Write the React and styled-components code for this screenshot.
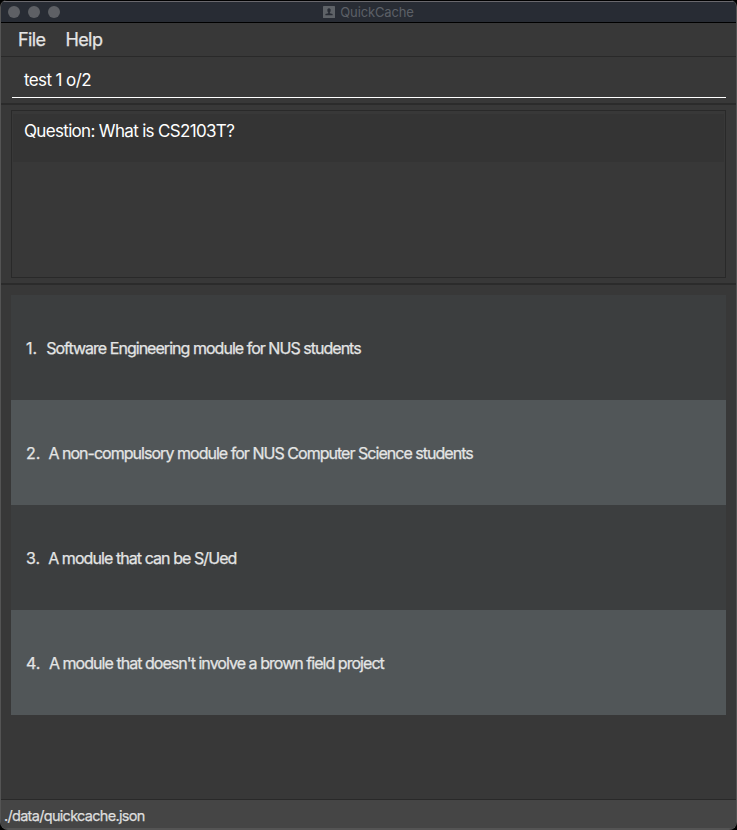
import React from "react";
import styled, { createGlobalStyle } from "styled-components";

const GlobalStyle = createGlobalStyle`
  * { box-sizing: border-box; }
  html, body { margin: 0; background: #000; }
  body { font-family: Inter, "Liberation Sans", sans-serif; overflow: hidden; }
`;

const Window = styled.main`
  width: 737px;
  height: 830px;
  display: flex;
  flex-direction: column;
  background: #383838;
  border: 1px solid #545454;
  border-top: 0;
  border-radius: 7px 7px 8px 8px;
  overflow: hidden;
`;

const TitleBar = styled.header`
  height: 23px;
  flex: none;
  display: grid;
  grid-template-columns: 1fr auto 1fr;
  align-items: center;
  padding: 1px 7px 0;
  background: #282c34;
  border-top: 1px solid #000;
  border-bottom: 1px solid #000;
  box-shadow: inset 0 1px #69686d;
`;

const Lights = styled.div`
  display: flex;
  gap: 8px;
`;

const Light = styled.span`
  width: 12px;
  height: 12px;
  border-radius: 50%;
  background: #5e6065;
`;

const Title = styled.div`
  display: flex;
  align-items: center;
  gap: 5px;
  color: #5c6067;
  font-size: 13px;
  line-height: 20px;
  letter-spacing: -0.15px;
`;

const MenuBar = styled.nav`
  height: 34px;
  flex: none;
  display: flex;
  gap: 20px;
  padding: 0 17px;
  border-bottom: 1px solid #292929;
`;

const MenuItem = styled.span`
  color: #e4e4e4;
  font-size: 18px;
  line-height: 34px;
  letter-spacing: -0.6px;
  -webkit-text-stroke: 0.25px currentColor;
`;

const CommandArea = styled.section`
  height: 48px;
  flex: none;
  padding: 0 10px 6px 11px;
  border-bottom: 2px solid #2b2b2b;
`;

const Command = styled.div`
  height: 41px;
  padding: 3px 12px 0;
  border-bottom: 1px solid #fff;
  color: #fff;
  font-size: 17px;
  line-height: 40px;
  letter-spacing: -0.6px;
  white-space: pre;
`;

const ResultArea = styled.section`
  height: 180px;
  flex: none;
  padding: 5px 10px;
  border-bottom: 2px solid #2b2b2b;
`;

const ResultBox = styled.div`
  height: 168px;
  padding: 3px 1px;
  border: 1px solid #292929;
`;

const ResultText = styled.div`
  height: 48px;
  padding-left: 11px;
  background: #343434;
  color: #fff;
  font-size: 17px;
  line-height: 35px;
  letter-spacing: -0.67px;
`;

const OptionList = styled.ul`
  flex: 1;
  margin: 0;
  padding: 10px 10px 0;
  list-style: none;
`;

const Option = styled.li`
  height: 105px;
  display: flex;
  align-items: center;
  gap: ${({ $gap }) => $gap}px;
  padding: 1px 15px 0;
  background: #3c3e3f;
  color: #e4e5e5;
  font-size: 16px;
  line-height: 22px;
  white-space: nowrap;
  -webkit-text-stroke: 0.25px currentColor;
  &:nth-child(even) { background: #515658; }
`;

const OptionText = styled.span`
  letter-spacing: ${({ $spacing }) => $spacing}px;
`;

const StatusBar = styled.footer`
  height: 30px;
  flex: none;
  padding: 1px 3px 0;
  background: #454545;
  border-top: 1px solid #292929;
  border-bottom: 1px solid #545454;
  color: #dedede;
  font-size: 14.5px;
  line-height: 30px;
  letter-spacing: -0.7px;
  -webkit-text-stroke: 0.25px currentColor;
`;

const options = [
  ["Software Engineering module for NUS students", -0.97, 9],
  ["A non-compulsory module for NUS Computer Science students", -0.97, 8],
  ["A module that can be S/Ued", -0.93, 8],
  ["A module that doesn't involve a brown field project", -0.96, 8.5],
];

function ContactIcon() {
  return (
    <svg width="12" height="12" viewBox="0 0 12 12" aria-hidden="true">
      <rect width="12" height="12" rx="0.6" fill="#5e6267" />
      <path d="M4.4 3.2Q6 1.4 7.6 3.2V5.2L6.8 6.4V7.2L9.6 8V9.2H2.4V8L5.2 7.2V6.4L4.4 5.2Z" fill="#282c34" />
    </svg>
  );
}

export default function App() {
  return (
    <>
      <GlobalStyle />
      <Window>
        <TitleBar>
          <Lights><Light /><Light /><Light /></Lights>
          <Title><ContactIcon />QuickCache</Title>
        </TitleBar>
        <MenuBar>
          <MenuItem>File</MenuItem>
          <MenuItem>Help</MenuItem>
        </MenuBar>
        <CommandArea><Command>test 1 o/2</Command></CommandArea>
        <ResultArea>
          <ResultBox><ResultText>Question: What is CS2103T?</ResultText></ResultBox>
        </ResultArea>
        <OptionList>
          {options.map(([text, spacing, gap], index) => (
            <Option key={text} $gap={gap}>
              <span>{index + 1}.</span>
              <OptionText $spacing={spacing}>{text}</OptionText>
            </Option>
          ))}
        </OptionList>
        <StatusBar>./data/quickcache.json</StatusBar>
      </Window>
    </>
  );
}
